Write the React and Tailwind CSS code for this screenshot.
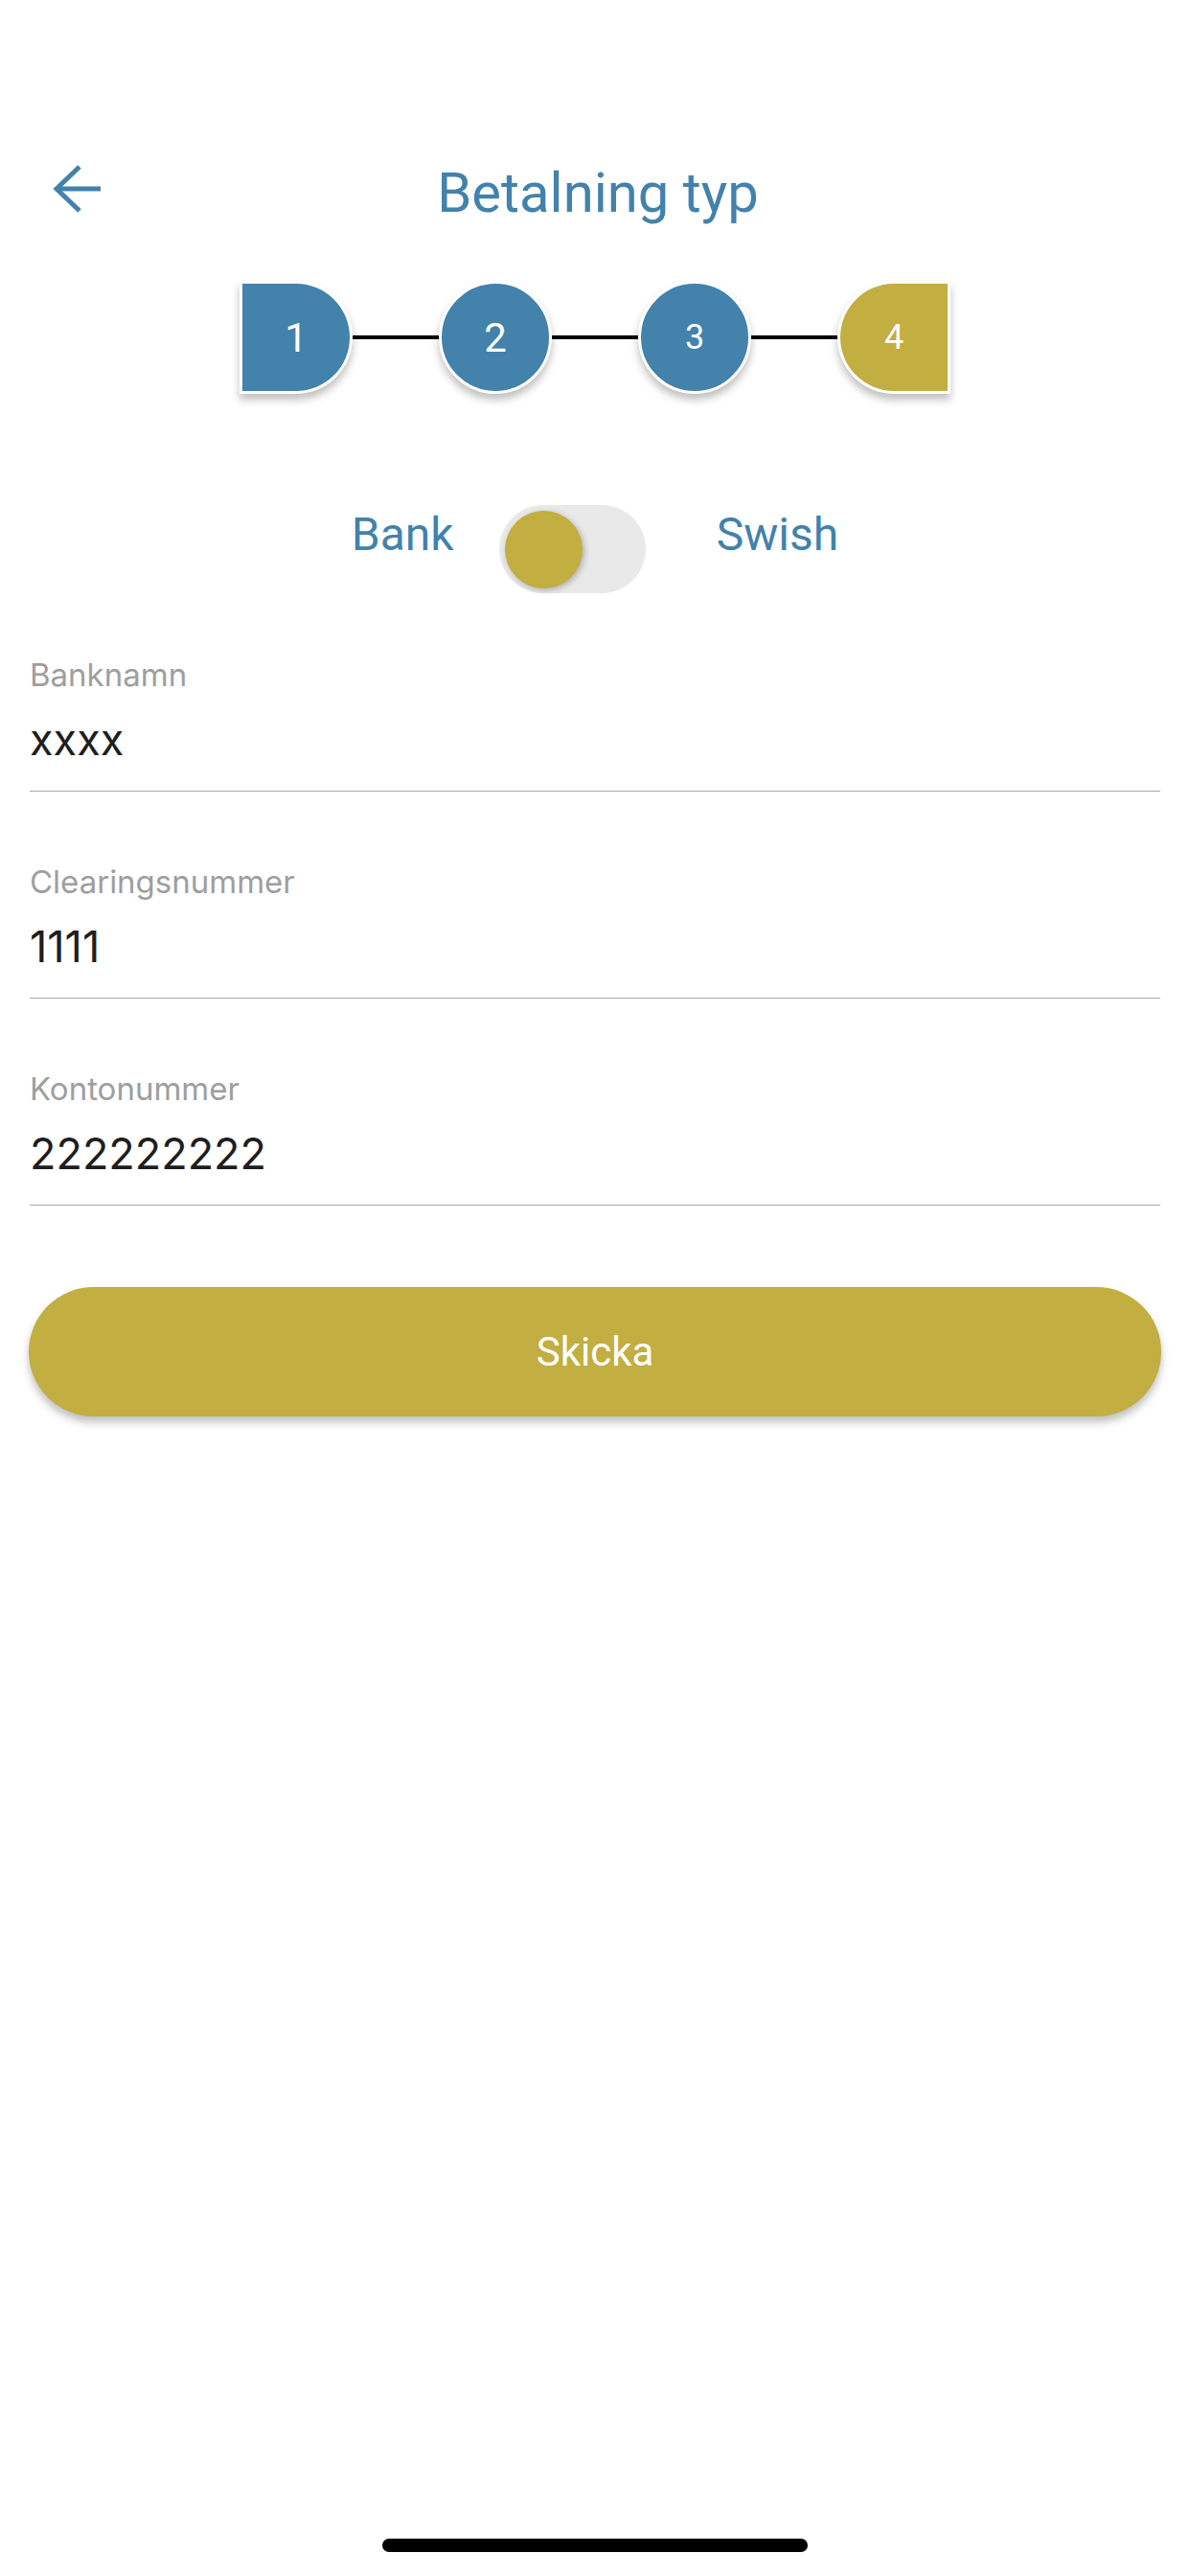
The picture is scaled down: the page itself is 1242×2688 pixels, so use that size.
import React from "react";

// Payment type screen (step 4 of 4)

const BLUE = "bg-[#4282ab]";
const GOLD = "bg-[#c2ae41]";

function BackArrow() {
  return (
    <svg width="52" height="50" viewBox="0 0 52 50" fill="none">
      <path d="M4 25 H50" stroke="#4282ab" strokeWidth="5" />
      <path d="M28 2 L4 25 L28 48" stroke="#4282ab" strokeWidth="5" strokeLinejoin="miter" />
    </svg>
  );
}

function Step({ n, shape, color, textSize }) {
  return (
    <div
      className={`w-[118px] h-[118px] border-[3px] border-white flex items-center justify-center text-white shadow-[0_6px_8px_rgba(0,0,0,0.25)] ${shape} ${color} ${textSize}`}
    >
      {n}
    </div>
  );
}

function Connector() {
  return <div className="w-[90px] h-[4px] bg-black" />;
}

function Field({ label, value, first }) {
  return (
    <div className={`border-b border-[#a8a8a8] pb-[26px] ${first ? "" : "mt-[74px]"}`}>
      <div className="text-[33px] leading-[40px] text-[#9e9e9e]">{label}</div>
      <div className="mt-[21px] text-[45px] leading-[54px] text-[#1e1e1e]">{value}</div>
    </div>
  );
}

export default function App() {
  return (
    <div className="w-[1242px] h-[2688px] bg-white flex flex-col font-['Roboto',sans-serif]">
      {/* Header */}
      <div className="mt-[153px] h-[96px] grid grid-cols-[160px_1fr_160px] items-center">
        <div className="pl-[55px] -mt-[8px]">
          <BackArrow />
        </div>
        <h1 className="text-center text-[58px] leading-[58px] text-[#4282ab] ml-[6px]">Betalning typ</h1>
        <div />
      </div>

      {/* Stepper */}
      <div className="mt-[44px] flex items-center justify-center">
        <Step n="1" shape="rounded-l-[10px] rounded-r-full" color={BLUE} textSize="text-[42px]" />
        <Connector />
        <Step n="2" shape="rounded-full" color={BLUE} textSize="text-[42px]" />
        <Connector />
        <Step n="3" shape="rounded-full" color={BLUE} textSize="text-[36px]" />
        <Connector />
        <Step n="4" shape="rounded-l-full rounded-r-[10px]" color={GOLD} textSize="text-[36px]" />
      </div>

      {/* Bank / Swish toggle */}
      <div className="mt-[116px] h-[92px] flex items-center justify-center text-[48px] leading-[48px] text-[#4282ab]">
        <span className="mr-[47px] mb-[30px]">Bank</span>
        <div className="w-[153px] h-[92px] rounded-full bg-[#e9e9e9] flex items-center pl-[6px]">
          <div className={`w-[81px] h-[81px] rounded-full ${GOLD} shadow-[2px_2px_6px_rgba(0,0,0,0.25)]`} />
        </div>
        <span className="ml-[74px] mb-[30px]">Swish</span>
      </div>

      {/* Form */}
      <div className="mt-[65px] px-[31px] font-['Inter',sans-serif]">
        <Field label="Banknamn" value="xxxx" first />
        <Field label="Clearingsnummer" value="1111" />
        <Field label="Kontonummer" value="222222222" />
      </div>

      <div className="mt-[85px] px-[30px]">
        <button className={`w-full h-[135px] rounded-full ${GOLD} text-white text-[42px] shadow-[0_6px_8px_rgba(0,0,0,0.25)]`}>
          Skicka
        </button>
      </div>

      {/* Home indicator */}
      <div className="mt-auto mb-[25px] mx-auto w-[444px] h-[14px] rounded-full bg-black" />
    </div>
  );
}
